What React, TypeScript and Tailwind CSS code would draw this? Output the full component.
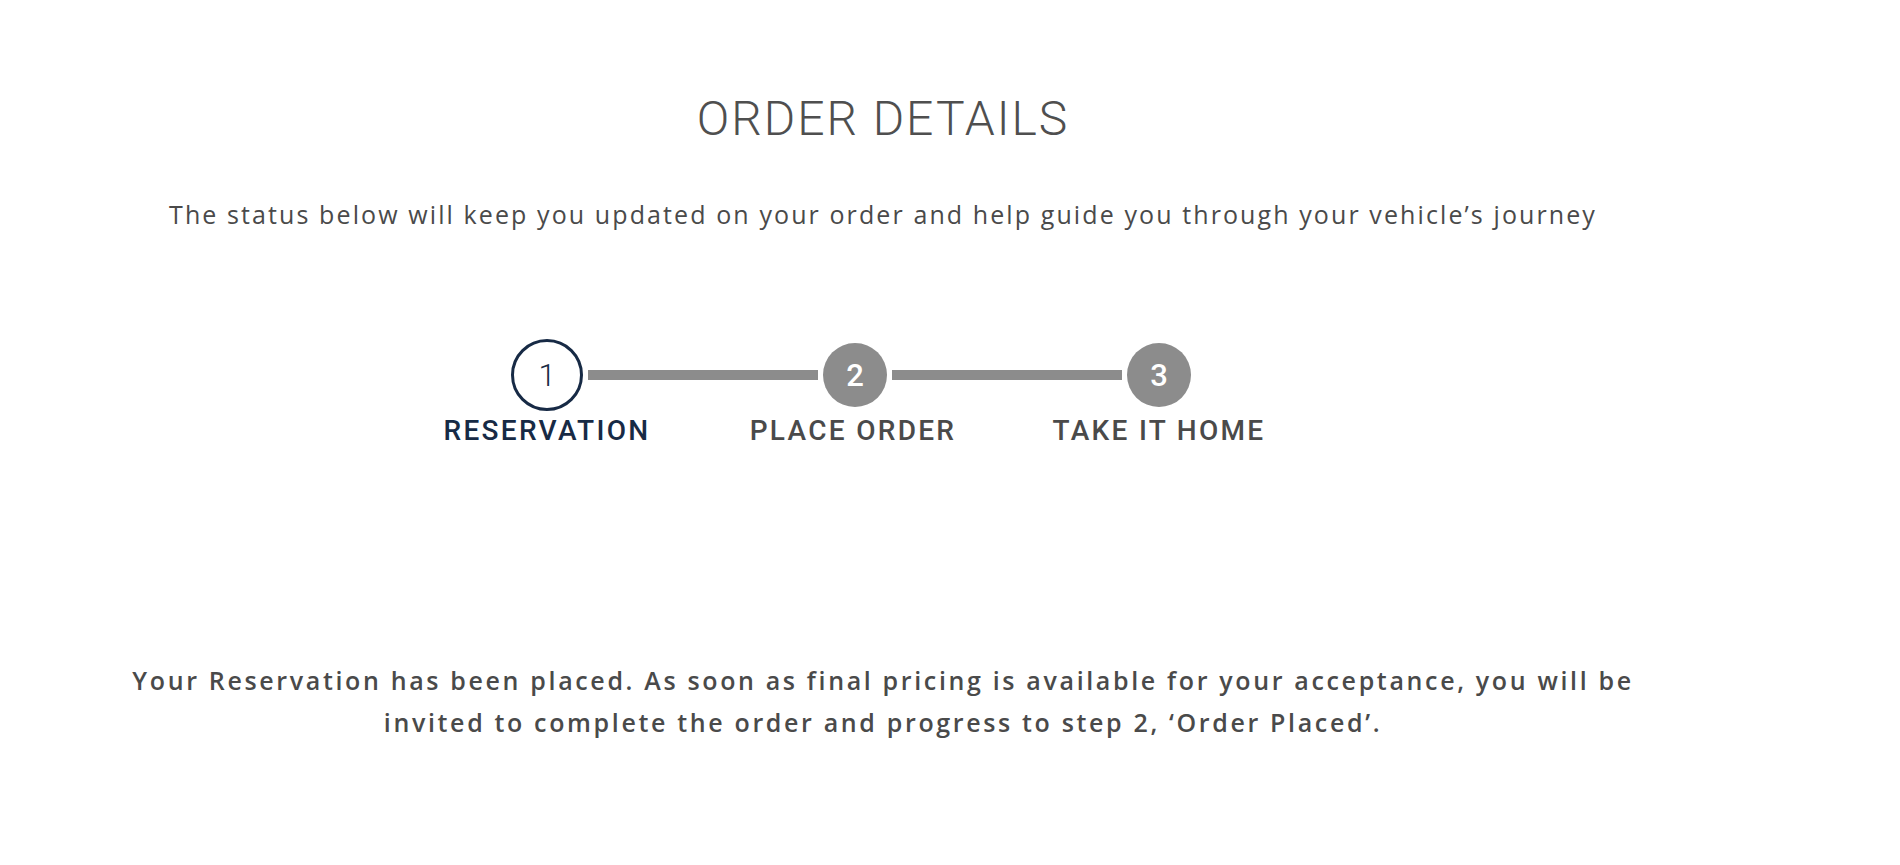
const steps = [
  { n: "1", label: "RESERVATION", active: true },
  { n: "2", label: "PLACE ORDER", active: false },
  { n: "3", label: "TAKE IT HOME", active: false },
];

function Connector() {
  return <div className="mx-[5px] h-[10px] w-[230px] bg-[#8c8c8c]" />;
}

function StepCircle({ n, active }: { n: string; active: boolean }) {
  if (active) {
    return (
      <div className="flex h-[72px] w-[72px] items-center justify-center rounded-full border-[3px] border-[#172a45] text-[31px] font-light leading-none text-[#172a45]">
        {n}
      </div>
    );
  }
  return (
    <div className="flex h-[64px] w-[64px] items-center justify-center rounded-full bg-[#8c8c8c] text-[31px] font-medium leading-none text-white">
      {n}
    </div>
  );
}

export default function App() {
  return (
    <div className="min-h-screen bg-white font-['Roboto','Liberation_Sans',sans-serif]">
      <div className="flex w-[1766px] flex-col items-center pt-[95px] text-center">
        <h1 className="text-[48px] font-light leading-none tracking-[2px] text-[#4f4f4f]">
          ORDER DETAILS
        </h1>
        <p className="mt-[55px] font-['Open_Sans','Liberation_Sans',sans-serif] text-[25px] leading-[32px] tracking-[2.1px] text-[#4a4a4a]">
          The status below will keep you updated on your order and help guide you through your vehicle’s journey
        </p>

        {/* stepper */}
        <div className="mt-[109px] w-[918px] self-start ml-[394px]">
          <div className="flex items-center pl-[117px]">
            <StepCircle n={steps[0].n} active />
            <Connector />
            <StepCircle n={steps[1].n} active={false} />
            <Connector />
            <StepCircle n={steps[2].n} active={false} />
          </div>
          <div className="mt-[6px] grid grid-cols-3">
            {steps.map((s) => (
              <div
                key={s.n}
                className={`text-[28px] font-medium leading-none tracking-[2.3px] ${
                  s.active ? "text-[#172a45]" : "text-[#4a4a4a]"
                }`}
              >
                {s.label}
              </div>
            ))}
          </div>
        </div>

        <p className="mt-[214px] max-w-[1560px] font-['Open_Sans','Liberation_Sans',sans-serif] text-[25px] font-semibold leading-[42px] tracking-[2.65px] text-[#4a4a4a]">
          Your Reservation has been placed. As soon as final pricing is available for your acceptance, you will be
          <br />
          invited to complete the order and progress to step 2, ‘Order Placed’.
        </p>
      </div>
    </div>
  );
}
